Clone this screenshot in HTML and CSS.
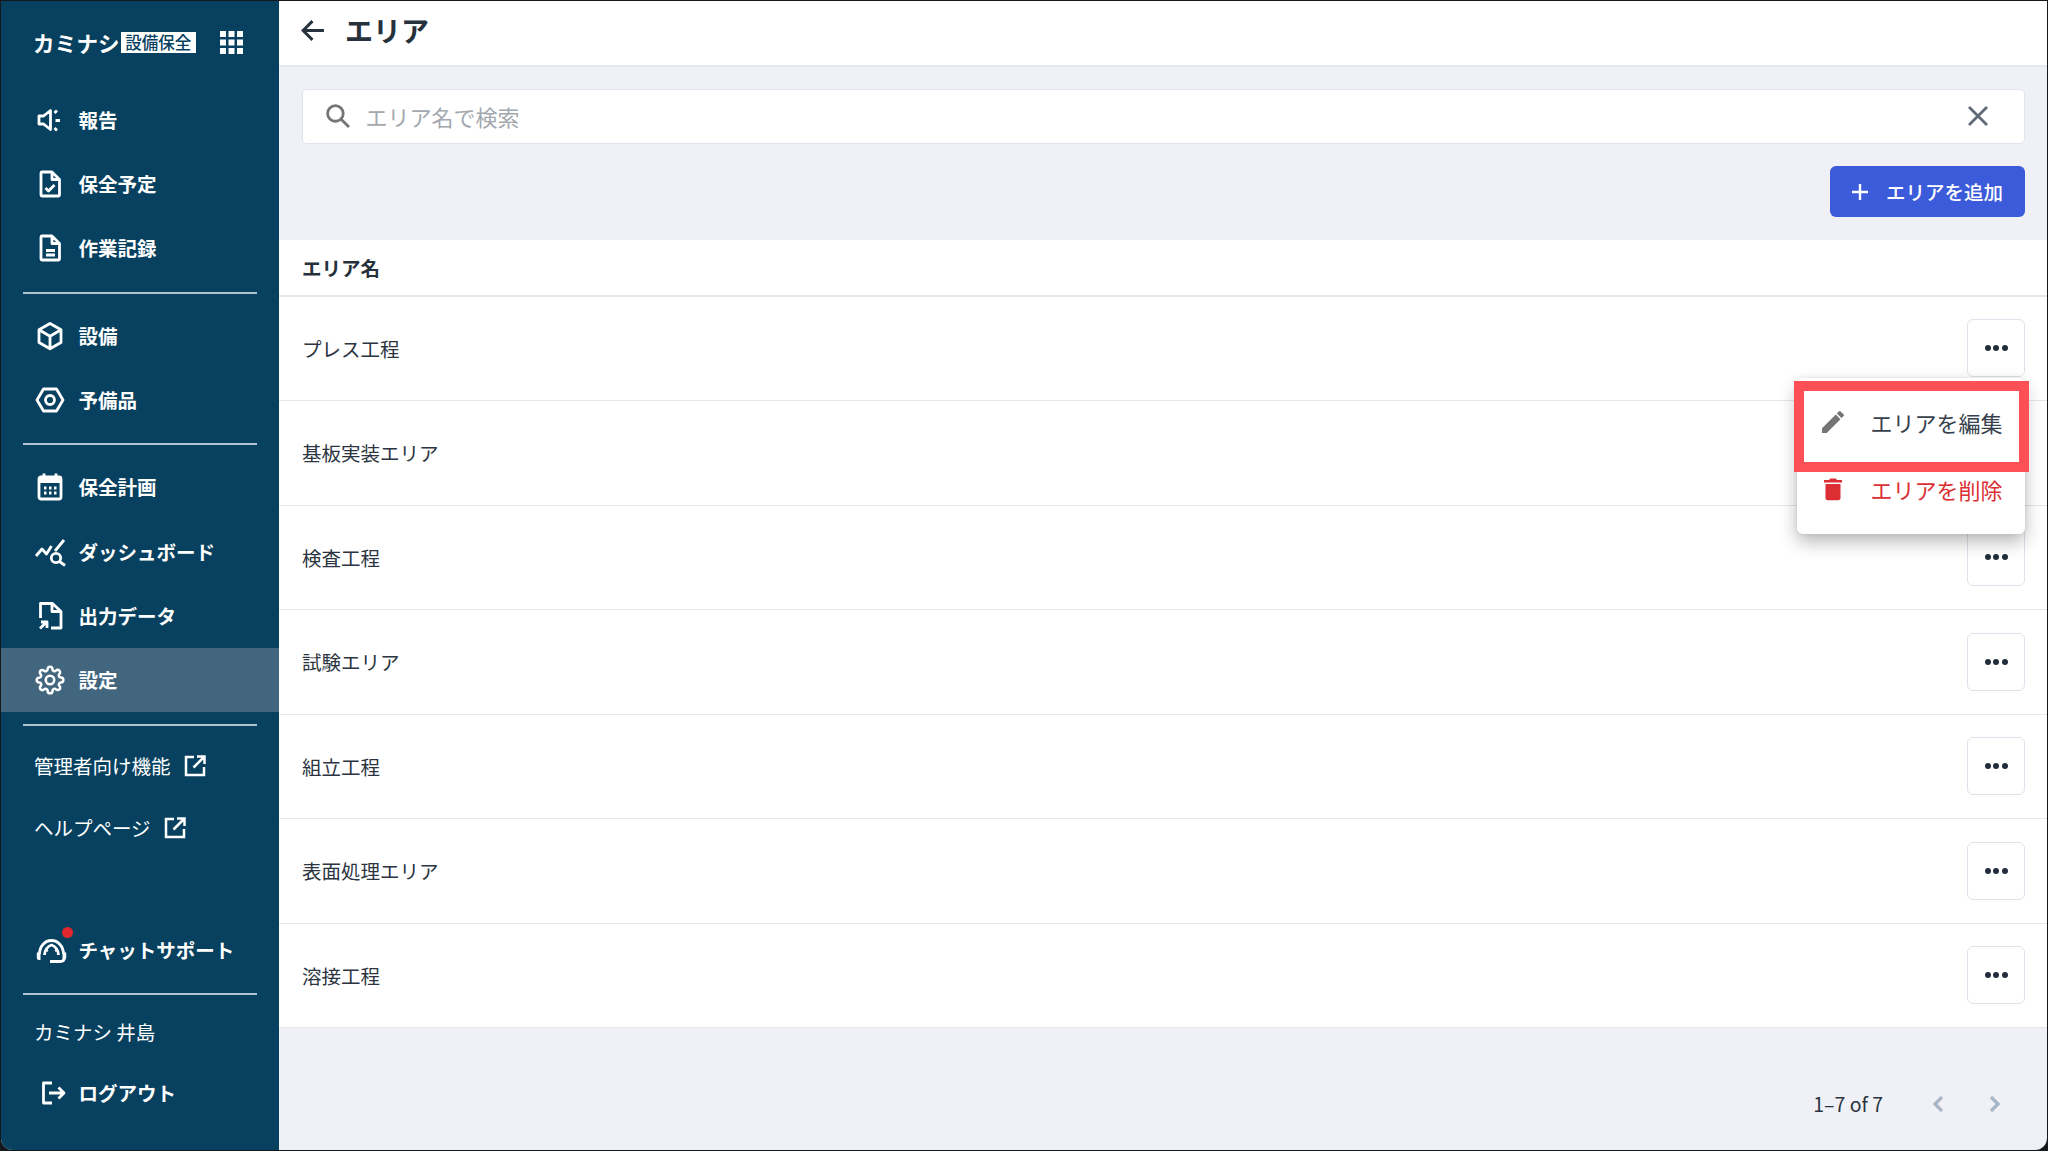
FILE: index.html
```html
<!DOCTYPE html>
<html lang="ja">
<head>
<meta charset="utf-8">
<title>エリア</title>
<link rel="stylesheet" href="styles.css">
</head>
<body>
<div class="window">
  <aside class="sidebar">
    <div class="brand">
      <span class="brand-name">カミナシ</span>
      <span class="brand-tag">設備保全</span>
      <svg class="grid-icon" viewBox="0 0 23 23"><path d="M0 0h6v6H0zM8.500 0h6v6h-6zM17 0h6v6h-6zM0 8.500h6v6H0zM8.500 8.500h6v6h-6zM17 8.500h6v6h-6zM0 17h6v6H0zM8.500 17h6v6h-6zM17 17h6v6h-6z"/></svg>
    </div>
    <a class="nav-item"><svg class="nav-icon" viewBox="0 0 32 32"><path d="M5 12h4.500l7-5.500v19l-7-5.500H5zM23 6.500l-2.500 2.500M21.500 16.500h4.500M20.500 24l2.500 2.500"/></svg><span>報告</span></a>
    <a class="nav-item"><svg class="nav-icon" viewBox="0 0 32 32"><path d="M8 4h10l7.500 7.500V27a1 1 0 0 1-1 1H8a1 1 0 0 1-1-1V5a1 1 0 0 1 1-1zM18 4v7.500h7.500M11.500 20l3 3 6-6"/></svg><span>保全予定</span></a>
    <a class="nav-item"><svg class="nav-icon" viewBox="0 0 32 32"><path d="M8 4h10l7.500 7.500V27a1 1 0 0 1-1 1H8a1 1 0 0 1-1-1V5a1 1 0 0 1 1-1zM18 4v7.500h7.500M12 18.500h9M12 23h9"/></svg><span>作業記録</span></a>
    <hr class="rule">
    <a class="nav-item"><svg class="nav-icon" viewBox="0 0 32 32"><path d="M16 3.500l11 6.300v12.700l-11 6.300-11-6.300V9.800zM5 9.800l11 6.400 11-6.400M16 16.200v12.300"/></svg><span>設備</span></a>
    <a class="nav-item"><svg class="nav-icon" viewBox="0 0 32 32"><path d="M9.500 5h13L29 16l-6.500 11h-13L3 16z"/><circle cx="16" cy="16" r="4.500"/></svg><span>予備品</span></a>
    <hr class="rule">
    <a class="nav-item"><svg class="nav-icon" viewBox="0 0 32 32"><rect x="5" y="6" width="22" height="22" rx="2"/><path class="solid" d="M5 6h22v6H5z"/><path d="M10 2.500v4M22 2.500v4M10 17h2.500M15 17h2.500M20 17h2.500M10 22h2.500M15 22h2.500M20 22h2.500"/></svg><span>保全計画</span></a>
    <a class="nav-item"><svg class="nav-icon" viewBox="0 0 32 32"><path d="M2 21l6-7 4.500 5 5-8M21 16l9-11M25.500 26.500l5.500 4"/><circle cx="22" cy="23" r="4.700"/></svg><span>ダッシュボード</span></a>
    <a class="nav-item"><svg class="nav-icon" viewBox="0 0 32 32"><path d="M6.500 18V3.500h12l8.500 8V28H17M18 3.500v8h9M6 28.500l6-6M7 22h6v6"/></svg><span>出力データ</span></a>
    <a class="nav-item is-active"><svg class="nav-icon gear" viewBox="-1.200 -1.200 26.400 26.400"><circle cx="12" cy="12" r="3.500"/><path d="M19.400 15a1.650 1.650 0 0 0 .33 1.820l.06.06a2 2 0 0 1 0 2.830 2 2 0 0 1-2.830 0l-.06-.06a1.650 1.650 0 0 0-1.820-.33 1.650 1.650 0 0 0-1 1.510V21a2 2 0 0 1-2 2 2 2 0 0 1-2-2v-.09A1.650 1.650 0 0 0 9 19.400a1.650 1.650 0 0 0-1.820.33l-.06.06a2 2 0 0 1-2.830 0 2 2 0 0 1 0-2.830l.06-.06a1.650 1.650 0 0 0 .33-1.820 1.650 1.650 0 0 0-1.510-1H3a2 2 0 0 1-2-2 2 2 0 0 1 2-2h.09A1.650 1.650 0 0 0 4.600 9a1.650 1.650 0 0 0-.33-1.820l-.06-.06a2 2 0 0 1 0-2.830 2 2 0 0 1 2.830 0l.06.06a1.650 1.650 0 0 0 1.820.33H9a1.650 1.650 0 0 0 1-1.510V3a2 2 0 0 1 2-2 2 2 0 0 1 2 2v.09a1.650 1.650 0 0 0 1 1.510 1.650 1.650 0 0 0 1.820-.33l.06-.06a2 2 0 0 1 2.830 0 2 2 0 0 1 0 2.830l-.06.06a1.650 1.650 0 0 0-.33 1.820V9a1.650 1.650 0 0 0 1.510 1H21a2 2 0 0 1 2 2 2 2 0 0 1-2 2h-.09a1.650 1.650 0 0 0-1.510 1z"/></svg><span>設定</span></a>
    <hr class="rule">
    <a class="ext-item"><span>管理者向け機能</span><svg class="ext-icon" viewBox="0 0 22 22"><path d="M10 2H2v18h18v-8M13 1.500h7.500V9M20 2L9.500 12.500"/></svg></a>
    <a class="ext-item"><span>ヘルプページ</span><svg class="ext-icon" viewBox="0 0 22 22"><path d="M10 2H2v18h18v-8M13 1.500h7.500V9M20 2L9.500 12.500"/></svg></a>
    <div class="side-spacer"></div>
    <a class="nav-item chat">
      <span class="chat-icon"><svg class="nav-icon" viewBox="0 0 32 32"><path d="M5.500 20a12 13.500 0 0 1 24 0M10.500 21c0-5 3.500-9 7-10 3.500 1 7 5 7 10M16 27.500h10.500c2 0 3.500-1 3.500-3"/><path class="solid" d="M2.800 18.500h3.700v7.500H5a2.200 2.200 0 0 1-2.200-2.200zM28.500 18.500h3.700v5.300a2.200 2.200 0 0 1-2.200 2.200h-1.500z"/><circle class="solid" cx="13" cy="16.500" r="1.200"/><circle class="solid" cx="22" cy="16.500" r="1.200"/></svg><i class="dot"></i></span>
      <span>チャットサポート</span>
    </a>
    <hr class="rule">
    <div class="ext-item user">カミナシ 井島</div>
    <a class="nav-item logout"><svg class="nav-icon" viewBox="0 0 32 32"><path d="M16 6H7.500v20H16M13 16h15M22.500 10.500L28 16l-5.500 5.500"/></svg><span>ログアウト</span></a>
  </aside>

  <main class="main">
    <header class="topbar">
      <svg class="back-icon" viewBox="0 0 24 24"><path d="M22 12H3M11 3l-9 9 9 9"/></svg>
      <h1 class="title">エリア</h1>
    </header>
    <div class="tools">
      <div class="search">
        <svg class="search-icon" viewBox="0 0 24 24"><circle cx="10" cy="10" r="7.500"/><path d="M15.500 15.500L23 23"/></svg>
        <span class="placeholder">エリア名で検索</span>
        <svg class="clear-icon" viewBox="0 0 20 20"><path d="M1 1l18 18M19 1L1 19"/></svg>
      </div>
      <div class="tool-actions">
        <button class="add-btn"><svg class="plus-icon" viewBox="0 0 16 16"><path d="M8 0v16M0 8h16"/></svg>エリアを追加</button>
      </div>
    </div>
    <section class="table">
      <div class="thead">エリア名</div>
      <div class="row"><span>プレス工程</span><button class="more"><i></i><i></i><i></i></button></div>
      <div class="row"><span>基板実装エリア</span><button class="more"><i></i><i></i><i></i></button></div>
      <div class="row"><span>検査工程</span><button class="more"><i></i><i></i><i></i></button></div>
      <div class="row"><span>試験エリア</span><button class="more"><i></i><i></i><i></i></button></div>
      <div class="row"><span>組立工程</span><button class="more"><i></i><i></i><i></i></button></div>
      <div class="row"><span>表面処理エリア</span><button class="more"><i></i><i></i><i></i></button></div>
      <div class="row"><span>溶接工程</span><button class="more"><i></i><i></i><i></i></button></div>
    </section>
    <footer class="pager">
      <span class="pager-text">1–7 of 7</span>
      <svg class="chev" viewBox="0 0 12 18"><path d="M10 2L3 9l7 7"/></svg>
      <svg class="chev" viewBox="0 0 12 18"><path d="M2 2l7 7-7 7"/></svg>
    </footer>

    <div class="menu">
      <div class="menu-item">
        <svg class="menu-icon" viewBox="0 0 24 24"><path fill="#757575" d="M1 18.300V23h4.700L19.500 9.200l-4.700-4.700zM22.600 6.100a1.250 1.250 0 0 0 0-1.800l-3-2.900a1.250 1.250 0 0 0-1.800 0l-2 2 4.700 4.700z"/></svg>
        <span>エリアを編集</span>
      </div>
      <div class="menu-item danger">
        <svg class="menu-icon" viewBox="0 0 24 24"><path fill="#dc2f34" d="M4.500 21c0 1.300 1 2.300 2.300 2.300h10.400c1.300 0 2.300-1 2.300-2.300V7H4.500zM21 3h-5l-1.300-1.500H9.300L8 3H3v2.400h18z"/></svg>
        <span>エリアを削除</span>
      </div>
      <div class="highlight"></div>
    </div>
  </main>
</div>
</body>
</html>
```

FILE: styles.css
```css
* { box-sizing: border-box; }
html, body { margin: 0; height: 100%; background: #16191c; overflow: hidden; }
body { font-family: "Noto Sans CJK JP", "Noto Sans", sans-serif; color: #2b3440; }

.window {
  display: flex;
  width: 2046px;
  height: 1149px;
  margin: 1px 0 0 1px;
  border-radius: 0 0 12px 12px;
  overflow: hidden;
  background: #eff1f6;
}

/* Sidebar */
.sidebar {
  display: flex;
  flex-direction: column;
  flex: 0 0 278px;
  background: #07415f;
  color: #fff;
}
.brand {
  display: flex;
  align-items: center;
  flex: none;
  height: 86.500px;
  padding: 0 0 4px 32px;
}
.brand-name { font-size: 21.500px; font-weight: 700; letter-spacing: 0.200px; line-height: 1; }
.brand-tag {
  flex: none;
  width: 75px;
  height: 21px;
  margin-left: 1px;
  background: #fff;
  color: #07415f;
  font-size: 16.500px;
  font-weight: 500;
  line-height: 21px;
  text-align: center;
}
.grid-icon { flex: none; width: 23px; height: 23px; margin-left: 24px; fill: #fff; }

.nav-item {
  display: flex;
  align-items: center;
  flex: none;
  height: 64.300px;
  padding-left: 33px;
  font-size: 19.500px;
  font-weight: 700;
  line-height: 1;
}
.nav-item.is-active { background: #43667f; }
.nav-icon {
  flex: none;
  width: 32px;
  height: 32px;
  margin-right: 12.500px;
  overflow: visible;
  fill: none;
  stroke: #fff;
  stroke-width: 2.800;
  stroke-linejoin: round;
}
.nav-icon.gear { stroke-width: 2.100; }
.nav-icon .solid { fill: #fff; stroke: none; }

.rule {
  flex: none;
  width: 234px;
  height: 2px;
  margin: 11.500px 0 9.500px 22px;
  border: 0;
  background: #b1c3cf;
}

.ext-item {
  display: flex;
  align-items: center;
  flex: none;
  height: 62px;
  padding-left: 33px;
  font-size: 19.500px;
  line-height: 1;
}
.ext-icon {
  width: 22px;
  height: 22px;
  margin-left: 13px;
  fill: none;
  stroke: #fff;
  stroke-width: 2.500;
}
.ext-item.user { height: 54px; margin-bottom: 2px; }
.side-spacer { flex: 1; }
.chat-icon { position: relative; display: flex; }
.dot {
  position: absolute;
  top: -7px;
  left: 28px;
  width: 11px;
  height: 11px;
  border-radius: 50%;
  background: #e0282e;
}
.logout { margin-bottom: 25px; }
.logout .nav-icon { margin-left: 2px; margin-right: 10.500px; }

/* Main */
.main {
  position: relative;
  display: flex;
  flex-direction: column;
  flex: 1;
  min-width: 0;
}
.topbar {
  display: flex;
  align-items: center;
  flex: none;
  height: 66px;
  padding: 0 0 6px 22px;
  background: #fff;
  border-bottom: 2px solid #e2e6ee;
}
.back-icon {
  width: 25px;
  height: 25px;
  fill: none;
  stroke: #27313c;
  stroke-width: 2.800;
}
.title { margin: 0 0 0 19px; font-size: 28px; font-weight: 700; line-height: 1; color: #27313c; }

.tools { flex: none; padding: 22px 22px 23px 22.500px; }
.search {
  display: flex;
  align-items: center;
  height: 55px;
  padding: 0 36px 2px 22px;
  background: #fff;
  border: 1.500px solid #e0e5ed;
  border-radius: 5px;
}
.search-icon {
  flex: none;
  width: 25px;
  height: 25px;
  fill: none;
  stroke: #757575;
  stroke-width: 2.700;
}
.placeholder { flex: 1; margin-left: 16px; font-size: 22px; line-height: 1; color: #a3a8ae; }
.clear-icon { flex: none; width: 20px; height: 20px; fill: none; stroke: #5f6a76; stroke-width: 2.800; }
.tool-actions { display: flex; justify-content: flex-end; margin-top: 22px; }
.add-btn {
  display: flex;
  align-items: center;
  height: 51px;
  width: 195px;
  padding: 0 0 0 22px;
  border: 0;
  border-radius: 6px;
  background: #3b5bdb;
  color: #fff;
  font: 500 19.500px "Noto Sans CJK JP", sans-serif;
}
.plus-icon { width: 16px; height: 16px; margin-right: 18px; fill: none; stroke: #fff; stroke-width: 2.400; }

.table { flex: none; background: #fff; }
.thead {
  display: flex;
  align-items: center;
  height: 56.500px;
  padding-left: 23px;
  border-bottom: 2px solid #e6e6e6;
  font-size: 19.500px;
  font-weight: 700;
  color: #27313c;
}
.row {
  display: flex;
  align-items: center;
  justify-content: space-between;
  height: 104.500px;
  padding: 0 22px 0 23px;
  border-bottom: 1.500px solid #e6e6e6;
  font-size: 19.500px;
}
.more {
  display: flex;
  align-items: center;
  justify-content: center;
  gap: 2.500px;
  width: 58px;
  height: 58px;
  padding: 0;
  background: #fff;
  border: 1.500px solid #dde3ec;
  border-radius: 6px;
}
.more i { width: 6px; height: 6px; border-radius: 50%; background: #222d3a; }

.pager {
  display: flex;
  align-items: center;
  justify-content: flex-end;
  flex: 1;
  padding: 29px 46px 0 0;
}
.pager-text { font-size: 19.500px; line-height: 1; margin-right: 49px; color: #2b3440; }
.chev { width: 12px; height: 18px; fill: none; stroke: #a9b6c6; stroke-width: 3.200; }
.chev + .chev { margin-left: 45px; }

/* Row menu, open over the table */
.menu {
  position: absolute;
  top: 377px;
  right: 22px;
  width: 228px;
  height: 156px;
  padding-top: 10.500px;
  background: #fff;
  border-radius: 6px;
  box-shadow: 0 8px 18px rgba(0, 0, 0, 0.28), 0 0 4px rgba(0, 0, 0, 0.08);
}
.menu-item {
  display: flex;
  align-items: center;
  height: 67px;
  padding-left: 24px;
  font-size: 22px;
  line-height: 1;
  color: #37414d;
}
.menu-item.danger { color: #dc2f34; }
.menu-icon { flex: none; width: 24px; height: 24px; margin-right: 25.500px; }
.highlight {
  position: absolute;
  top: 3px;
  left: -3px;
  width: 235px;
  height: 91px;
  border: 10px solid #fd5056;
}
```
